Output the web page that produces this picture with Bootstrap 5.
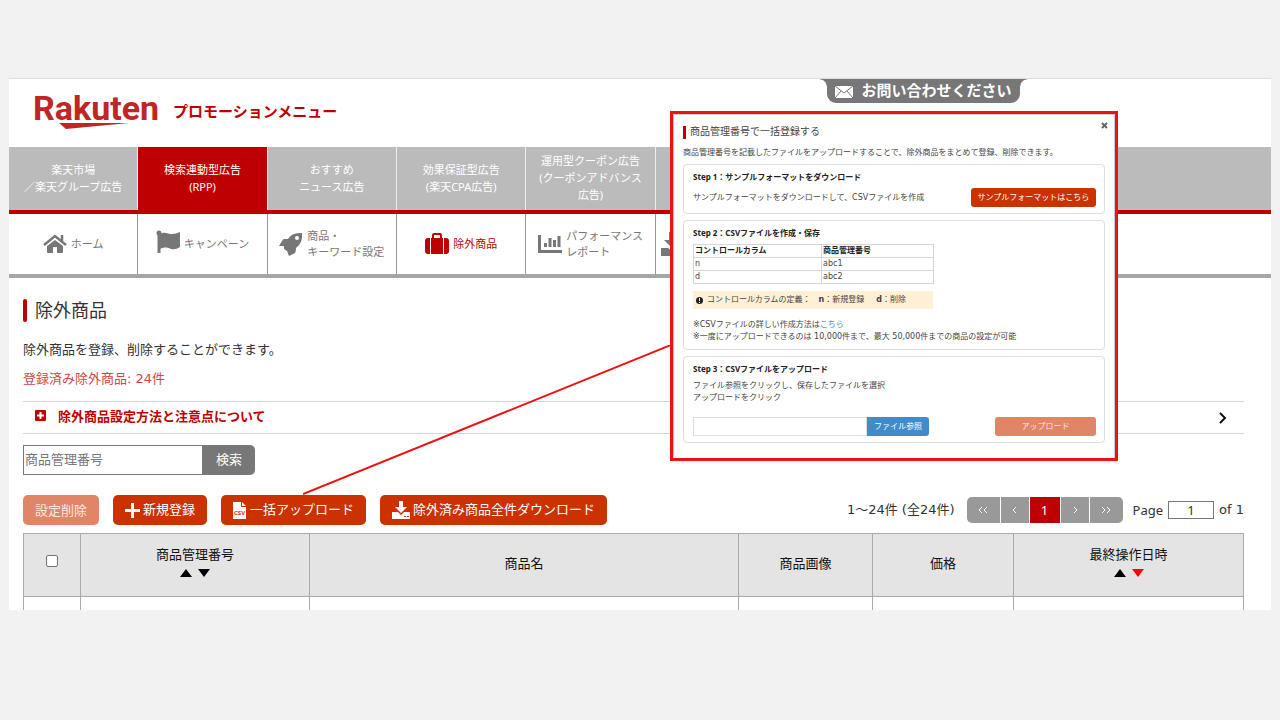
<!DOCTYPE html>
<html lang="ja">
<head>
<meta charset="utf-8">
<meta name="viewport" content="width=device-width, initial-scale=1">
<title>除外商品 | プロモーションメニュー</title>
<link href="https://cdn.jsdelivr.net/npm/bootstrap@5.3.0/dist/css/bootstrap.min.css" rel="stylesheet">
<script src="https://cdn.jsdelivr.net/npm/bootstrap@5.3.0/dist/js/bootstrap.bundle.min.js" defer></script>
<style>
  body { background: #f2f2f2; color: #333; font: 13px/20px "Noto Sans", "Noto Sans CJK JP", sans-serif; padding: 78px 9px; }
  a { text-decoration: none; }
  .wide-num { font-family: "DejaVu Sans", "Noto Sans CJK JP", sans-serif; }
  .panel { background: #fff; border-top: 1px solid #ddd; }
  .page-head { height: 68px; padding: 0 24px 10px; }
  .logo { color: #bf2626; font: 700 34px/40px Roboto, sans-serif; }
  .logo svg { left: 25px; top: 34px; }
  .logo-sub { color: #bf0000; font-size: 15px; font-weight: 700; margin-left: 14px; padding-top: 6px; }
  .contact { top: 0; right: 251px; height: 24px; width: 193px; padding-bottom: 2px; background: #777; color: #fff; font-size: 15px; font-weight: 700; border-radius: 0 0 9px 9px; }
  .contact::before, .contact::after { content: ""; position: absolute; top: 0; width: 7px; height: 7px; }
  .contact::before { left: -7px; background: radial-gradient(circle at 0 100%, transparent 6px, #777 7px); }
  .contact::after { right: -7px; background: radial-gradient(circle at 100% 100%, transparent 6px, #777 7px); }
  .main-tabs { background: #bbb; border-bottom: 4px solid #bf0000; min-height: 67px; }
  .main-tabs a { flex: 0 0 10.25%; color: #fff; font-size: 11px; line-height: 17px; padding-bottom: 2px; border-right: 1px solid #eee; }
  .main-tabs a.on { background: #bf0000; }
  .sub-tabs { border-bottom: 4px solid #a6a6a6; min-height: 64px; }
  .sub-tabs a { flex: 0 0 10.25%; color: #777; font-size: 11px; line-height: 16px; border-right: 1px solid #999; }
  .sub-tabs a:last-child { border-right: 0; }
  .sub-tabs a.on { color: #bf0000; }
  .body-area { padding: 20px 27px 0 14px; }
  .ttl { font-size: 18px; line-height: 24px; font-weight: 400; margin-bottom: 17px; }
  .ttl::before { content: ""; width: 4px; height: 23px; margin-right: 8px; border-radius: 2px; background: #bf0000; }
  .lead-text { margin-bottom: 10px; }
  .total { color: #d2464b; margin-bottom: 12px; }
  .guide { border: solid #d6d6d6; border-width: 1px 0; height: 33px; margin-bottom: 11px; color: #bf0000; font-weight: 700; }
  .guide span { padding-bottom: 4px; }
  .find { margin-bottom: 20px; }
  .find input { width: 180px; height: 30px; border: 1px solid #777; padding: 0 2px 2px 1px; border-radius: 0; }
  .find input::placeholder { color: #777; }
  .find button { width: 52px; height: 30px; border: 0; padding: 0 0 2px; background: #777; color: #fff; border-radius: 0 5px 5px 0; }
  .acts { gap: 14px; }
  .act { height: 30px; border: 0; border-radius: 5px; background: #cc3200; color: #fff; padding: 0 12px; gap: 3px; }
  .act span { padding-bottom: 2px; }
  .faded, .mini.faded { background: #e08566; color: #fbe8e0; }
  .pager { gap: 1px; margin: 0 10px 0 12px; }
  .pager a { height: 26px; width: 28px; background: #999; color: #fff; }
  .pager a.edge { width: 33px; }
  .pager a.on { background: #bf0000; width: 30px; }
  .pager a:first-child { border-radius: 5px 0 0 5px; }
  .pager a:last-child { border-radius: 0 5px 5px 0; }
  .page-no { width: 46px; height: 18px; border: 1px solid #777; padding: 0; margin: 0 5px; text-align: center; color: #333; }
  .items { table-layout: fixed; width: 100%; }
  .items th { background: #e4e4e4; border: 1px solid #aaa; height: 63px; padding: 0 0 5px; font-weight: 400; text-align: center; color: #111; vertical-align: middle; }
  .items th:first-child { padding: 0; }
  .items td { border: solid #aaa; border-width: 0 1px; height: 13px; padding: 0; }
  .items .form-check-input { width: 12px; height: 12px; margin: 0; border: 1px solid #777; border-radius: 2px; }
  .callout-line { left: 294px; top: 266px; }
  .popup { left: 661px; top: 32px; width: 448px; height: 350px; border: 3px solid #ee1111; background: #fff; box-shadow: inset 1px 1px 0 #ccc, inset -1px 0 0 #ccc; padding: 9px 10px; font-size: 8px; line-height: 12px; color: #444; font-family: "DejaVu Sans", "Noto Sans CJK JP", sans-serif; }
  .popup h2 { font-size: 10px; line-height: 16px; margin: 1px 0 7px; font-weight: 400; }
  .popup h2::before { content: ""; width: 3px; height: 13px; margin-right: 4px; background: #bf0000; }
  .popup h3 { font-size: 8px; line-height: 12px; margin: 0 0 5px; font-weight: 700; font-family: "Noto Sans", "Noto Sans CJK JP", sans-serif; color: #222; }
  .popup p { margin-bottom: 5px; }
  .shut { right: 5px; top: 5px; width: 12px; height: 12px; border: 0; background: none; padding: 0; }
  .step { border: 1px solid #ddd; border-radius: 4px; padding: 6px 8px 6px 9px; margin-bottom: 6px; }
  .step .upload-text { margin-bottom: 13px; }
  .mini { height: 19px; border: 0; border-radius: 3px; color: #fff; background: #cc3200; padding: 0; font-size: 8px; }
  .sample { width: 125px; }
  .send { width: 101px; }
  .csv { width: 240px; table-layout: fixed; margin-bottom: 7px; }
  .csv th, .csv td { border: 1px solid #d6d6d6; height: 13px; line-height: 12px; padding: 0 1px; }
  .csv th { color: #222; }
  .note { width: 240px; height: 18px; background: #fff0d6; padding: 0 3px; margin-bottom: 10px; }
  .step .remarks { margin-bottom: 0; }
  .remarks a { color: #428bca; }
  .file { width: 174px; height: 19px; border: 1px solid #ddd; padding: 0 2px; }
  .pick { width: 62px; background: #428bca; border-radius: 0 3px 3px 0; }
</style>
</head>
<body>
<div class="panel position-relative">
  <header class="page-head d-flex align-items-center">
    <div class="logo position-relative">Rakuten
      <svg class="position-absolute" width="72" height="8" viewBox="0 0 72 8" aria-hidden="true"><path d="M1 1H71L8 7Z" fill="#bf2626"/></svg>
    </div>
    <span class="logo-sub">プロモーションメニュー</span>
    <a class="contact position-absolute d-flex align-items-center justify-content-center" href="#">
      <svg class="me-2 mt-1" width="18" height="12" viewBox="0 0 18 12" fill="#fff" aria-hidden="true"><path d="M0 0H18V12H0Z"/><path d="M0 0 9 7 18 0M0 12 6 5M18 12 12 5" fill="none" stroke="#777"/></svg>
      <span>お問い合わせください</span>
    </a>
  </header>

  <nav class="main-tabs d-flex text-center" aria-label="広告メニュー">
    <a href="#" class="d-flex align-items-center justify-content-center">楽天市場<br>／楽天グループ広告</a>
    <a href="#" class="on d-flex align-items-center justify-content-center">検索連動型広告<br>(RPP)</a>
    <a href="#" class="d-flex align-items-center justify-content-center">おすすめ<br>ニュース広告</a>
    <a href="#" class="d-flex align-items-center justify-content-center">効果保証型広告<br>(楽天CPA広告)</a>
    <a href="#" class="d-flex align-items-center justify-content-center">運用型クーポン広告<br>(クーポンアドバンス<br>広告)</a>
  </nav>
  <nav class="sub-tabs d-flex" aria-label="RPPメニュー">
    <a href="#" class="d-flex align-items-center justify-content-center gap-1">
      <svg width="24" height="20" viewBox="0 0 24 20" fill="#777" aria-hidden="true"><path d="M12 6 4 12V18Q4 19 5 19H10V13H14V19H19Q20 19 20 18V12Z"/><path d="M1 11 12 2 23 11M19 1V7" fill="none" stroke="#777" stroke-width="2.500"/></svg>ホーム</a>
    <a href="#" class="d-flex align-items-center justify-content-center gap-1">
      <svg class="mb-1" width="24" height="24" viewBox="0 0 24 24" fill="#777" aria-hidden="true"><circle cx="3" cy="3" r="2.500"/><path d="M1.500 3H4.500V23H1.500Z"/><path d="M4 4C9 1 12 4 16 4Q20 4 24 2V17Q20 20 15 19C11 17 8 17 4 19Z"/></svg>キャンペーン</a>
    <a href="#" class="d-flex align-items-center justify-content-center gap-1">
      <svg width="24" height="24" viewBox="0 0 24 24" fill="#777" aria-hidden="true"><path fill-rule="evenodd" d="M23 1Q13 0 9 7H5Q4 7 3 9L0 14H5L5 17 8 19 10 24 16 21Q17 20 17 16Q24 11 23 1ZM18 4A2 2 0 1 0 18 8 2 2 0 1 0 18 4Z"/></svg><span>商品・<br>キーワード設定</span></a>
    <a href="#" class="on d-flex align-items-center justify-content-center gap-1">
      <svg width="24" height="22" viewBox="0 0 24 22" fill="#bf0000" aria-hidden="true"><path d="M5 5V21H3Q0 21 0 18V8Q0 5 3 5ZM19 5V21H21Q24 21 24 18V8Q24 5 21 5Z"/><path fill-rule="evenodd" d="M6 21V5H7V2Q7 0 9 0H15Q17 0 17 2V5H18V21ZM9 5H15V2H9Z"/></svg>除外商品</a>
    <a href="#" class="d-flex align-items-center justify-content-center gap-1">
      <svg width="24" height="20" viewBox="0 0 24 20" fill="none" stroke="#777" stroke-width="3" aria-hidden="true"><path d="M1.500 1V17.500H24"/><path d="M7.500 9V13M12 4V13M16.500 6V13M21 2V13"/></svg><span>パフォーマンス<br>レポート</span></a>
    <a href="#" class="d-flex align-items-center ps-1" aria-label="ダウンロード">
      <svg width="24" height="24" viewBox="0 0 24 24" fill="#777" aria-hidden="true"><path d="M9 0H15V8H20L12 16 4 8H9Z"/><path d="M1 16H8L12 19 16 16H23V24H1Z"/></svg></a>
  </nav>

  <main class="body-area">
    <h1 class="ttl d-flex align-items-center">除外商品</h1>
    <p class="lead-text">除外商品を登録、削除することができます。</p>
    <p class="total wide-num">登録済み除外商品: 24件</p>
    <a class="guide d-flex align-items-center px-2" href="#">
      <svg class="mx-1 mb-1" width="11" height="11" viewBox="0 0 11 11" aria-hidden="true"><rect width="11" height="11" rx="1" fill="#bf0000"/><path d="M5.500 2V9M2 5.500H9" stroke="#fff" stroke-width="2"/></svg>
      <span class="ms-2">除外商品設定方法と注意点について</span>
      <svg class="ms-auto me-2" width="10" height="12" viewBox="0 0 10 12" fill="none" stroke="#111" stroke-width="2" aria-hidden="true"><path d="M2 1 7 6 2 11"/></svg>
    </a>
    <form class="find d-flex"><input type="text" placeholder="商品管理番号" aria-label="商品管理番号"><button type="button">検索</button></form>

    <div class="acts d-flex align-items-center">
      <button class="act faded" type="button"><span>設定削除</span></button>
      <button class="act d-flex align-items-center" type="button"><svg width="15" height="15" viewBox="0 0 15 15" stroke="#fff" stroke-width="3" aria-hidden="true"><path d="M7.500 0V15M0 7.500H15"/></svg><span>新規登録</span></button>
      <button class="act d-flex align-items-center" type="button"><svg width="14" height="18" viewBox="0 0 14 18" aria-hidden="true"><path d="M0 1H8V6H13V18H0ZM9 1 13 5H9Z" fill="#fff"/><text x="6.500" y="14" text-anchor="middle" font-size="6" font-weight="700" fill="#cc3200">CSV</text></svg><span>一括アップロード</span></button>
      <button class="act d-flex align-items-center" type="button"><svg width="18" height="18" viewBox="0 0 18 18" fill="#fff" aria-hidden="true"><path d="M7 0H11V6H15L9 12 3 6H7Z"/><path fill-rule="evenodd" d="M0 11H6L9 14 12 11H18V18H0ZM12 15V16H14V15ZM15 15V16H17V15Z"/></svg><span>除外済み商品全件ダウンロード</span></button>
      <div class="ms-auto d-flex align-items-center">
        <span class="wide-num">1～24件 (全24件)</span>
        <nav class="pager d-flex" aria-label="ページ送り">
          <a class="edge d-flex align-items-center justify-content-center" href="#" aria-label="最初"><svg width="12" height="8" viewBox="0 0 12 8" fill="none" stroke="#fff" aria-hidden="true"><path d="M5 1 2 4 5 7M10 1 7 4 10 7"/></svg></a>
          <a class="d-flex align-items-center justify-content-center" href="#" aria-label="前"><svg width="6" height="8" viewBox="0 0 6 8" fill="none" stroke="#fff" aria-hidden="true"><path d="M4 1 1 4 4 7"/></svg></a>
          <a class="on d-flex align-items-center justify-content-center" href="#">1</a>
          <a class="d-flex align-items-center justify-content-center" href="#" aria-label="次"><svg width="6" height="8" viewBox="0 0 6 8" fill="none" stroke="#fff" aria-hidden="true"><path d="M2 1 5 4 2 7"/></svg></a>
          <a class="edge d-flex align-items-center justify-content-center" href="#" aria-label="最後"><svg width="12" height="8" viewBox="0 0 12 8" fill="none" stroke="#fff" aria-hidden="true"><path d="M2 1 5 4 2 7M7 1 10 4 7 7"/></svg></a>
        </nav>
        <label for="pno">Page</label><input id="pno" class="page-no" type="text" value="1"><span class="wide-num">of 1</span>
      </div>
    </div>

    <table class="items mt-2">
      <colgroup><col style="width:57px"><col style="width:229px"><col style="width:429px"><col style="width:134px"><col style="width:141px"><col style="width:230px"></colgroup>
      <thead><tr>
        <th><input class="form-check-input" type="checkbox" aria-label="すべて選択"></th>
        <th>商品管理番号<div class="d-flex justify-content-center"><svg width="32" height="18" viewBox="0 0 32 18" aria-hidden="true"><path d="M1 13 7 5 13 13Z"/><path d="M19 5H31L25 13Z"/></svg></div></th>
        <th>商品名</th><th>商品画像</th><th>価格</th>
        <th>最終操作日時<div class="d-flex justify-content-center"><svg width="32" height="18" viewBox="0 0 32 18" aria-hidden="true"><path d="M1 13 7 5 13 13Z"/><path d="M19 5H31L25 13Z" fill="red"/></svg></div></th>
      </tr></thead>
      <tbody><tr><td></td><td></td><td></td><td></td><td></td><td></td></tr></tbody>
    </table>
  </main>

  <svg class="callout-line position-absolute" width="368" height="150" viewBox="0 0 368 150" aria-hidden="true"><path d="M0 149 368 0" stroke="#ee1111" stroke-width="2"/></svg>

  <section class="popup position-absolute" role="dialog" aria-labelledby="pt">
    <button class="shut position-absolute d-flex align-items-center justify-content-center" type="button" aria-label="閉じる"><svg width="7" height="7" viewBox="0 0 7 7" stroke="#666" stroke-width="2"><path d="M1 1 6 6M6 1 1 6"/></svg></button>
    <h2 id="pt" class="d-flex align-items-center">商品管理番号で一括登録する</h2>
    <p>商品管理番号を記載したファイルをアップロードすることで、除外商品をまとめて登録、削除できます。</p>
    <div class="step">
      <h3>Step 1：サンプルフォーマットをダウンロード</h3>
      <div class="d-flex justify-content-between align-items-center"><span>サンプルフォーマットをダウンロードして、CSVファイルを作成</span><button class="mini sample" type="button">サンプルフォーマットはこちら</button></div>
    </div>
    <div class="step">
      <h3>Step 2：CSVファイルを作成・保存</h3>
      <table class="csv">
        <colgroup><col style="width:128px"><col style="width:112px"></colgroup>
        <thead><tr><th>コントロールカラム</th><th>商品管理番号</th></tr></thead>
        <tbody><tr><td>n</td><td>abc1</td></tr><tr><td>d</td><td>abc2</td></tr></tbody>
      </table>
      <div class="note d-flex align-items-center"><svg class="me-1" width="7" height="7" viewBox="0 0 7 7" aria-hidden="true"><circle cx="3.500" cy="3.500" r="3.500" fill="#222"/><path d="M3.500 1V4M3.500 5V6" stroke="#fff"/></svg>コントロールカラムの定義：<span class="ms-2"><b>n</b>：新規登録</span><span class="ms-2 ps-1"><b>d</b>：削除</span></div>
      <p class="remarks">※CSVファイルの詳しい作成方法は<a href="#">こちら</a><br>※一度にアップロードできるのは 10,000件まで、最大 50,000件までの商品の設定が可能</p>
    </div>
    <div class="step mb-0">
      <h3>Step 3：CSVファイルをアップロード</h3>
      <p class="upload-text">ファイル参照をクリックし、保存したファイルを選択<br>アップロードをクリック</p>
      <div class="d-flex"><input class="file" type="text" aria-label="CSVファイル"><button class="mini pick" type="button">ファイル参照</button><button class="mini faded send ms-auto" type="button">アップロード</button></div>
    </div>
  </section>
</div>
</body>
</html>
